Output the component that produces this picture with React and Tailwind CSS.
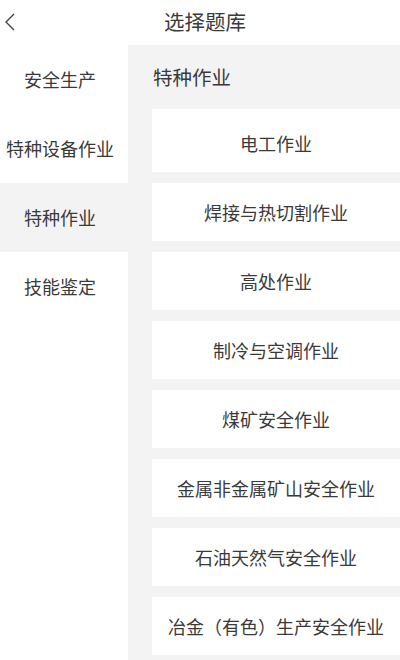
import { useState } from 'react';

const categories = ['安全生产', '特种设备作业', '特种作业', '技能鉴定'];

const banks = [
  '电工作业',
  '焊接与热切割作业',
  '高处作业',
  '制冷与空调作业',
  '煤矿安全作业',
  '金属非金属矿山安全作业',
  '石油天然气安全作业',
  '冶金（有色）生产安全作业',
];

export default function App() {
  const [active, setActive] = useState(2);

  return (
    <div
      className="w-[400px] h-[660px] overflow-hidden bg-white text-[#3a3a3a]"
      style={{ fontFamily: '"Noto Sans CJK SC", "Noto Sans", sans-serif' }}
    >
      <header className="relative h-[45px] flex items-center justify-center">
        <button className="absolute left-[2px] top-[11px] w-[16px] h-[22px] flex items-center justify-center">
          <svg width="12" height="20" viewBox="0 0 12 20" fill="none">
            <polyline points="10,2 2,10 10,18" stroke="#444" strokeWidth="1.4" />
          </svg>
        </button>
        <h1 className="text-[20.5px] leading-none ml-[10px] -mt-[2px]">选择题库</h1>
      </header>

      <div className="flex h-[615px]">
        <nav className="w-[128px] shrink-0">
          {categories.map((name, i) => (
            <div
              key={name}
              onClick={() => setActive(i)}
              className={`h-[69px] flex items-center justify-center pr-[8px] text-[18px] whitespace-nowrap cursor-pointer ${
                i === active ? 'bg-[#f3f3f3]' : 'bg-white'
              }`}
            >
              {name}
            </div>
          ))}
        </nav>

        <section className="flex-1 bg-[#f3f3f3] pl-[24px]">
          <div className="h-[64px] flex items-center text-[19.5px] pl-[1px]">
            {categories[active]}
          </div>
          <div className="flex flex-col gap-[11px]">
            {banks.map((name, i) => (
              <div
                key={name}
                className={`bg-white flex items-center justify-center text-[18px] whitespace-nowrap ${
                  i === 0 ? 'h-[63px] pt-[5px]' : 'h-[58px]'
                }`}
              >
                {name}
              </div>
            ))}
          </div>
        </section>
      </div>
    </div>
  );
}
